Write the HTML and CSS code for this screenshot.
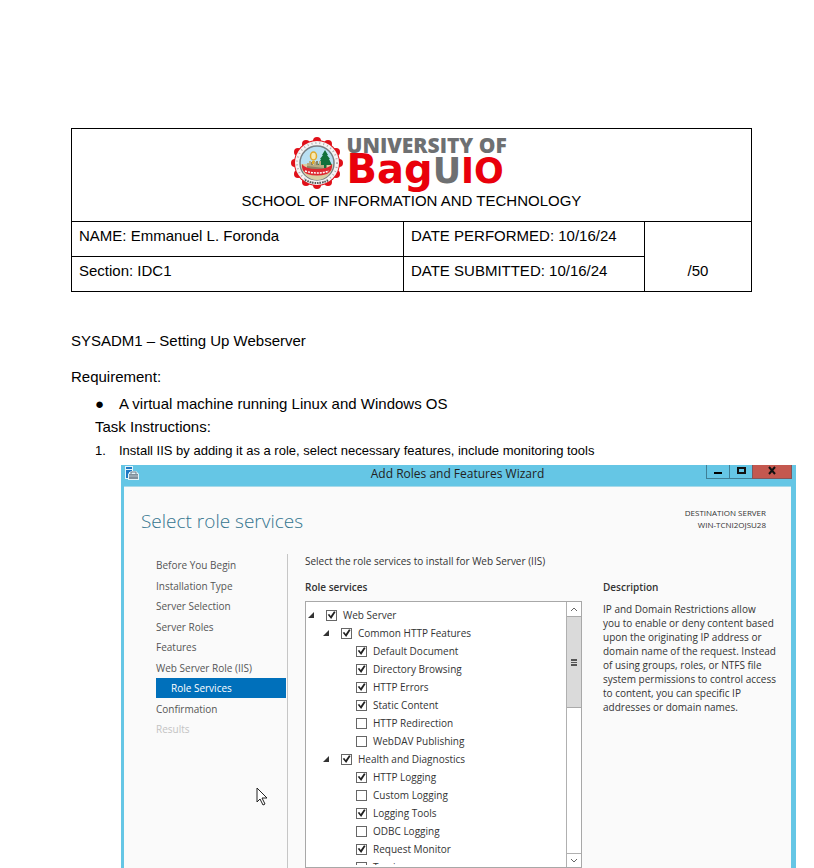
FILE: index.html
```html
<!DOCTYPE html>
<html lang="en">
<head>
<meta charset="utf-8">
<meta name="viewport" content="width=device-width, initial-scale=1">
<title>SYSADM1 – Setting Up Webserver</title>
<link rel="stylesheet" href="styles.css">
</head>
<body>
<main class="page">
  <table class="sheet">
    <colgroup><col class="c-name"><col class="c-date"><col class="c-score"></colgroup>
    <tr class="head">
      <td colspan="3">
        <div class="brand">
          <svg class="seal" viewBox="0 0 52 52" aria-hidden="true">
            <g fill="#e01019">
              <circle cx="26" cy="26" r="23"/>
              <circle cx="26" cy="4" r="4"/><circle cx="37" cy="7" r="4"/><circle cx="45" cy="15" r="4"/><circle cx="48" cy="26" r="4"/><circle cx="45" cy="37" r="4"/><circle cx="37" cy="45" r="4"/><circle cx="26" cy="48" r="4"/><circle cx="15" cy="45" r="4"/><circle cx="7" cy="37" r="4"/><circle cx="4" cy="26" r="4"/><circle cx="7" cy="15" r="4"/><circle cx="15" cy="7" r="4"/>
            </g>
            <circle cx="26" cy="26" r="22" fill="#f4f4f4"/>
            <circle cx="26" cy="26" r="20" fill="none" stroke="#b0b0b0" stroke-width="2" stroke-dasharray="1 3"/>
            <circle cx="26" cy="26" r="17" fill="#b9e0f3" stroke="#777f84" stroke-width="1.5"/>
            <path d="M10 27h32a16 16 0 0 1-32 0z" fill="#d9cfa5"/>
            <path d="M16 32v-5h3v-2h3v3h3v-4h2v4h4v-3h2v3h3v4z" fill="#8d8468"/>
            <ellipse cx="22.500" cy="19" rx="3" ry="4" fill="#f7e9b0" stroke="#e0a92c" stroke-width="1.500"/>
            <path d="M21 24h3v3h-3z" fill="#e0a92c"/>
            <path d="M34 13l3 5h-1l3 4h-1l3 6h-6v3h-2v-3h-6l3-6h-1l3-4h-1z" fill="#11703c"/>
            <path d="M11 27q3 5 15 5t15-5q1 7-5 10-10 3-20 0-6-3-5-10z" fill="#de2730"/>
            <path d="M16 29v-3h2v-2h2v4h3v-3h2v3h3v-4h2v4h3v3z" fill="#b9ad83"/>
            <path d="M14 34q12 4 24 0" fill="none" stroke="#fff" stroke-width="1.500" stroke-dasharray="2 1"/>
            <path d="M14 43q12 6 24 0" fill="none" stroke="#555" stroke-width="2" stroke-dasharray="1.500 1"/>
          </svg>
          <div class="wordmark">
            <div class="wm-top">UNIVERSITY OF</div>
            <div class="wm-main">Bag<span class="wm-small"><span class="wm-gray">U</span>IO</span></div>
          </div>
        </div>
        <div>SCHOOL OF INFORMATION AND TECHNOLOGY</div>
      </td>
    </tr>
    <tr>
      <td>NAME: Emmanuel L. Foronda</td>
      <td>DATE PERFORMED: 10/16/24</td>
      <td class="score" rowspan="2">/50</td>
    </tr>
    <tr>
      <td>Section: IDC1</td>
      <td>DATE SUBMITTED: 10/16/24</td>
    </tr>
  </table>

  <p class="subject">SYSADM1 – Setting Up Webserver</p>
  <p class="requirement">Requirement:</p>
  <div class="item"><span class="marker">●</span><span>A virtual machine running Linux and Windows OS</span></div>
  <p class="task">Task Instructions:</p>
  <div class="item step"><span class="marker">1.</span><span>Install IIS by adding it as a role, select necessary features, include monitoring tools</span></div>

  <section class="wizard">
    <header class="titlebar">
      <svg class="app-icon" viewBox="0 0 14 14" aria-hidden="true">
        <path d="M0 0h8v13H0z" fill="#e4f4fa"/><path d="M1 1h6v2H1zM1 4h3v8H1z" fill="#1e78c4"/><path d="M4 4h3v2H4z" fill="#1e78c4"/>
        <path d="M3 8l3-3h5l3 3v6H3z" fill="#e4f4fa"/><path d="M4 8h9v5H4z" fill="#7f8f9b"/><path d="M6 8V6h5v2" fill="none" stroke="#6f7f8c"/><path d="M4 10h9" stroke="#b5c2ca"/>
      </svg>
      <h1 class="caption">Add Roles and Features Wizard</h1>
      <div class="controls">
        <button class="ctl" aria-label="Minimize"><svg width="10" height="12" viewBox="0 0 10 12"><path d="M1 6h8v2H1z"/></svg></button>
        <button class="ctl" aria-label="Maximize"><svg width="10" height="12" viewBox="0 0 10 12"><path d="M2 2h7v5H2z" fill="none" stroke="#111" stroke-width="2"/></svg></button>
        <button class="ctl close" aria-label="Close"><svg width="10" height="12" viewBox="0 0 10 12"><path d="M2 1l6 7M8 1L2 8" stroke="#111" stroke-width="2"/></svg></button>
      </div>
    </header>
    <div class="client">
      <div class="heading">
        <h2 class="title">Select role services</h2>
        <div class="server">DESTINATION SERVER<br>WIN-TCNI2OJSU28</div>
      </div>
      <div class="columns">
        <nav class="steps">
          <ul>
            <li><a href="#">Before You Begin</a></li>
            <li><a href="#">Installation Type</a></li>
            <li><a href="#">Server Selection</a></li>
            <li><a href="#">Server Roles</a></li>
            <li><a href="#">Features</a></li>
            <li><a href="#">Web Server Role (IIS)</a></li>
            <li><a class="current" href="#" aria-current="step">Role Services</a></li>
            <li><a href="#">Confirmation</a></li>
            <li><a class="off" aria-disabled="true">Results</a></li>
          </ul>
          <svg class="pointer" viewBox="0 0 12 19" aria-hidden="true"><path d="M1 1v14l3-3 3 6 2-1-3-6h5z" fill="#fff" stroke="#222"/></svg>
        </nav>
        <div class="roles">
          <p class="prompt">Select the role services to install for Web Server (IIS)</p>
          <h3 class="label">Role services</h3>
          <div class="listbox">
            <div class="tree">
              <div class="row l0"><i class="twisty"></i><label><input type="checkbox" checked>Web Server</label></div>
              <div class="row l1"><i class="twisty"></i><label><input type="checkbox" checked>Common HTTP Features</label></div>
              <div class="row l2"><label><input type="checkbox" checked>Default Document</label></div>
              <div class="row l2"><label><input type="checkbox" checked>Directory Browsing</label></div>
              <div class="row l2"><label><input type="checkbox" checked>HTTP Errors</label></div>
              <div class="row l2"><label><input type="checkbox" checked>Static Content</label></div>
              <div class="row l2"><label><input type="checkbox">HTTP Redirection</label></div>
              <div class="row l2"><label><input type="checkbox">WebDAV Publishing</label></div>
              <div class="row l1"><i class="twisty"></i><label><input type="checkbox" checked>Health and Diagnostics</label></div>
              <div class="row l2"><label><input type="checkbox" checked>HTTP Logging</label></div>
              <div class="row l2"><label><input type="checkbox">Custom Logging</label></div>
              <div class="row l2"><label><input type="checkbox" checked>Logging Tools</label></div>
              <div class="row l2"><label><input type="checkbox">ODBC Logging</label></div>
              <div class="row l2"><label><input type="checkbox" checked>Request Monitor</label></div>
              <div class="row l2"><label><input type="checkbox">Tracing</label></div>
            </div>
            <div class="scroll">
              <button class="arrow" aria-label="Scroll up"><svg width="8" height="6" viewBox="0 0 8 6"><path d="M1 5l3-3 3 3" fill="none" stroke="#666"/></svg></button>
              <div class="thumb"><i class="grip"></i></div>
              <button class="arrow down" aria-label="Scroll down"><svg width="8" height="6" viewBox="0 0 8 6"><path d="M1 1l3 3 3-3" fill="none" stroke="#666"/></svg></button>
            </div>
          </div>
        </div>
        <aside class="about">
          <h3 class="label">Description</h3>
          <p>IP and Domain Restrictions allow<br>you to enable or deny content based<br>upon the originating IP address or<br>domain name of the request. Instead<br>of using groups, roles, or NTFS file<br>system permissions to control access<br>to content, you can specific IP<br>addresses or domain names.</p>
        </aside>
      </div>
    </div>
  </section>
</main>
</body>
</html>
```
FILE: styles.css
```css
* { box-sizing: border-box; }
body { margin: 0; background: #fff; color: #000; font: 15px/18px "Liberation Sans", Arial, sans-serif; }
h1, h2, h3, p, ul { margin: 0; padding: 0; font-weight: normal; }
button { margin: 0; padding: 0; font: inherit; }

.page { display: flex; flex-direction: column; height: 100vh; padding: 128px 18px 0 71px; overflow: hidden; }

.sheet { width: calc(100% - 44px); border-collapse: collapse; table-layout: fixed; flex: none; }
.c-date { width: 241px; }
.c-score { width: 107px; }
.sheet td { height: 35px; padding: 5px 7px; border: 1px solid #000; vertical-align: top; }
.sheet .head td { height: 93px; padding: 8px 7px 0; text-align: center; }
.sheet .score { vertical-align: bottom; padding-bottom: 11px; text-align: center; }
.brand { display: flex; justify-content: center; gap: 4px; height: 55px; padding-right: 22px; text-align: left; }
.seal { width: 52px; height: 52px; }
.wordmark { width: 164px; font-family: "Open Sans", sans-serif; font-weight: 800; color: #e9000b; white-space: nowrap; }
.wm-top { color: #6e7072; font-size: 21px; line-height: 16px; }
.wm-main { font: bold 40px/32px "DejaVu Sans", sans-serif; }
.wm-small { font-size: 35px; }
.wm-gray { color: #6e7072; }

.subject { margin-top: 40px; }
.requirement { margin-top: 18px; }
.item { display: flex; margin: 9px 0 0 24px; }
.marker { width: 24px; }
.task { margin: 5px 0 0 24px; }
.step { margin-top: 6px; font-size: 13px; line-height: 17px; }

.wizard { flex: 1; min-height: 0; display: flex; flex-direction: column; margin: 6px 0 0 50px; background: #65c6e5; padding: 0 5px 0 3px; font-family: "Open Sans", "Noto Sans", sans-serif; font-size: 10px; line-height: 14px; color: #333; }
.titlebar { display: grid; grid-template-columns: 85px 1fr 85px; height: 21px; flex: none; }
.app-icon { width: 14px; height: 14px; margin: 1px; }
.caption { font-size: 12px; line-height: 17px; text-align: center; color: #222; }
.controls { display: flex; height: 14px; }
.ctl { width: 24px; border: 1px solid #3f7f96; border-top: 0; margin-right: -1px; background: #65c6e5; line-height: 0; }
.close { flex: 1; background: #c4584f; border-color: #83565a; }
.client { flex: 1; min-height: 0; display: flex; flex-direction: column; background: #fafafa; border-top: 1px solid #a7d9e9; padding: 0 10px 0 17px; }
.heading { display: flex; justify-content: space-between; flex: none; height: 67px; padding: 20px 15px 0 0; }
.title { font-size: 19px; line-height: 28px; font-weight: 300; color: #34758f; }
.server { font-size: 8px; line-height: 12px; text-align: right; }
.columns { flex: 1; min-height: 0; display: grid; grid-template-columns: 132px minmax(0, 294fr) minmax(0, 199fr); grid-template-rows: minmax(0, 1fr); padding-left: 15px; }
.steps { position: relative; border-right: 1px solid #c6c6c6; }
.steps ul { display: grid; grid-auto-rows: 1fr; height: 185px; margin-top: 1px; list-style: none; }
.steps a { display: block; color: #555; text-decoration: none; line-height: 20px; }
.steps .current { background: #0070bb; color: #fff; padding-left: 15px; margin-right: 1px; }
.steps .off { color: #c3c3c3; }
.pointer { position: absolute; left: 100px; top: 233px; width: 12px; height: 19px; }
.roles { display: flex; flex-direction: column; min-height: 0; padding-left: 17px; }
.prompt { margin-bottom: 12px; }
.label { font-size: 10px; line-height: 14px; font-weight: 600; }
.listbox { flex: 1; min-height: 0; display: flex; margin-top: 7px; border: 1px solid #a8a8a8; background: #fff; }
.tree { flex: 1; padding-top: 4px; margin-bottom: 2px; overflow: hidden; }
.row { display: flex; align-items: center; height: 18px; }
.l0 { padding-left: 2px; }
.l1 { padding-left: 17px; }
.l2 { padding-left: 50px; }
.twisty { width: 6px; height: 6px; margin-right: 12px; background: #333; clip-path: polygon(100% 0, 100% 100%, 0 100%); }
.row label { display: flex; align-items: center; gap: 6px; white-space: nowrap; }
.row input { appearance: none; width: 11px; height: 11px; margin: 0; border: 1px solid #666; background: #fff; }
.row input:checked::before { content: ""; display: block; width: 9px; height: 9px; background: #222; clip-path: polygon(8% 48%, 25% 38%, 42% 62%, 78% 8%, 96% 18%, 46% 94%); }
.scroll { width: 15px; display: flex; flex-direction: column; border-left: 1px solid #b0b0b0; }
.arrow { height: 14px; border: 0; background: #fff; line-height: 0; }
.down { margin-top: auto; border-top: 1px solid #b0b0b0; }
.thumb { display: grid; place-items: center; height: 92px; border: 1px solid #aaa; border-width: 1px 0; background: #dadada; }
.grip { width: 6px; height: 7px; border: solid #555; border-width: 2px 0; background: linear-gradient(#555, #555) center / 6px 1px no-repeat; }
.about { padding: 26px 0 0 21px; }
.about p { margin-top: 8px; white-space: nowrap; }
```
